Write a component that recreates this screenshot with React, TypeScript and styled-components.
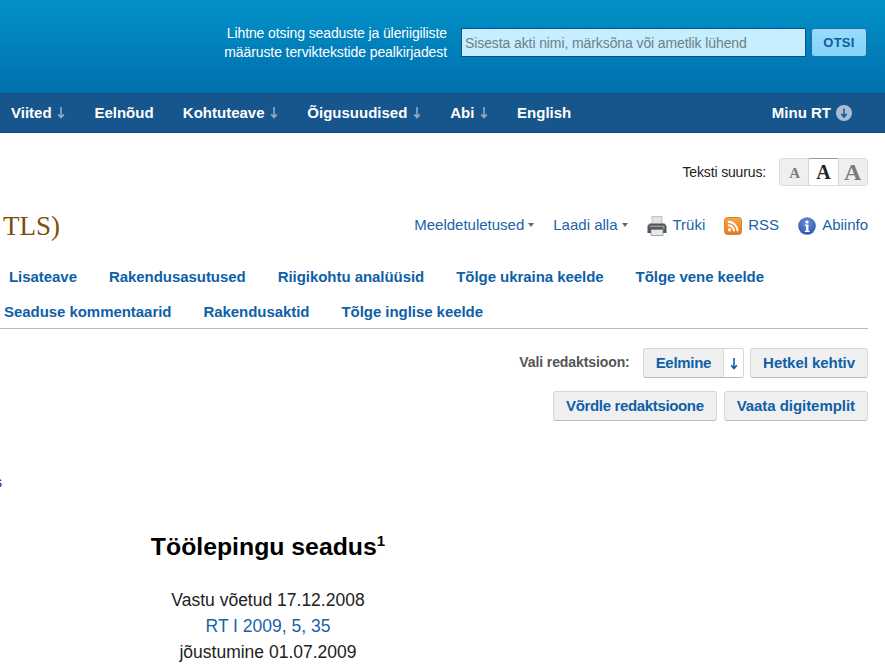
import { FC } from 'react';
import styled, { createGlobalStyle } from 'styled-components';

const GlobalStyle = createGlobalStyle`
  html, body {
    margin: 0;
    padding: 0;
    background: #fff;
    overflow: hidden;
  }
  body {
    font-family: "Liberation Sans", Arial, sans-serif;
    color: #222;
  }
`;

const Page = styled.div`
  width: 885px;
  height: 670px;
  overflow: hidden;
`;

const Header = styled.header`
  height: 93px;
  box-sizing: border-box;
  padding: 1px 18px 9px 0;
  display: flex;
  align-items: center;
  justify-content: flex-end;
  background-color: #0076b2;
  background-image:
    radial-gradient(rgba(255, 255, 255, 0.04) 1px, transparent 1px),
    linear-gradient(#0091c8, #006fae);
  background-size: 3px 3px, 100% 100%;
`;

const SearchLabel = styled.div`
  color: #fff;
  font-size: 14px;
  line-height: 19px;
  letter-spacing: -0.1px;
  text-align: right;
  margin-right: 14px;
`;

const SearchInput = styled.input`
  width: 345px;
  height: 29px;
  box-sizing: border-box;
  padding: 0 3px;
  border: 1px solid #0a5486;
  background: #c6eeff;
  font: 14px "Liberation Sans", Arial, sans-serif;
  letter-spacing: -0.1px;
  &::placeholder {
    color: #6f7f88;
    opacity: 1;
  }
`;

const SearchButton = styled.button`
  width: 56px;
  height: 29px;
  margin-left: 5px;
  padding: 0;
  border: 1px solid #1c6ea6;
  border-radius: 3px;
  background: linear-gradient(#98dcfb, #84d3f9);
  color: #0d5c9d;
  font: bold 13px "Liberation Sans", Arial, sans-serif;
  letter-spacing: 0.3px;
`;

const Nav = styled.nav`
  height: 40px;
  box-sizing: border-box;
  padding: 0 33px 1px 11px;
  display: flex;
  align-items: center;
  gap: 29.3px;
  background: #16568c;
  box-shadow: inset 0 1px #124f80, inset 0 -1px #124f80;
`;

const NavItem = styled.a`
  display: flex;
  align-items: center;
  gap: 5.5px;
  color: #fff;
  font-size: 15px;
  font-weight: bold;
`;

const ArrowSvg = styled.svg<{ $tone: string }>`
  display: block;
  color: ${({ $tone }) => $tone};
`;

const NavRight = styled(NavItem)`
  margin-left: auto;
  gap: 5px;
`;

const Content = styled.main`
  padding-right: 17px;
`;

const SizeRow = styled.div`
  height: 28px;
  margin-top: 25px;
  display: flex;
  align-items: center;
  justify-content: flex-end;
  gap: 13px;
  font-size: 14px;
  letter-spacing: -0.15px;
`;

const SizeControl = styled.div`
  display: flex;
  height: 28px;
  box-sizing: border-box;
  border: 1px solid #dcdcdc;
  border-radius: 3px;
  background: #efefef;
`;

const SizeCell = styled.span<{ $size: number; $active?: boolean }>`
  width: 29px;
  display: flex;
  align-items: center;
  justify-content: center;
  padding-top: ${({ $size }) => (24 - $size) / 4}px;
  font-family: "Liberation Serif", serif;
  font-weight: bold;
  font-size: ${({ $size }) => $size}px;
  color: ${({ $active }) => ($active ? '#222' : '#7c7c7c')};
  background: ${({ $active }) => ($active ? '#fff' : 'transparent')};
  box-shadow: ${({ $active }) => ($active ? '0 -1px #999, 1px 0 #d4d4d4, -1px 0 #d4d4d4' : 'none')};
`;

const TitleRow = styled.div`
  height: 40px;
  margin-top: 19px;
  display: flex;
  align-items: center;
  justify-content: space-between;
`;

const ActTitle = styled.h1`
  margin: 0 0 0 3px;
  padding-top: 2px;
  font: normal 27px "Liberation Serif", serif;
  color: #7d4e0a;
`;

const Tools = styled.div`
  display: flex;
  align-items: center;
  gap: 19px;
  margin-bottom: 2px;
`;

const Tool = styled.a`
  display: flex;
  align-items: center;
  gap: 6px;
  color: #1b63a8;
  font-size: 15px;
  svg {
    margin-top: 3px;
  }
`;

const MenuTool = styled(Tool)`
  gap: 4px;
`;

const Caret = styled.span`
  width: 0;
  height: 0;
  margin-top: 2px;
  border: 3.5px solid transparent;
  border-top: 4px solid #666;
  border-bottom: 0;
`;

const Tabs = styled.div`
  margin-top: 14px;
  border-bottom: 1px solid #bbb;
`;

const TabRow = styled.div<{ $inset: number }>`
  height: 35px;
  box-sizing: border-box;
  padding: 9px 0 0 ${({ $inset }) => $inset}px;
  display: flex;
  align-items: flex-start;
  gap: 32px;
  &:last-child {
    height: 34px;
  }
`;

const Tab = styled.a`
  color: #0f5fa8;
  font-size: 15px;
  font-weight: bold;
  line-height: 17px;
  letter-spacing: -0.05px;
`;

const VersionRow = styled.div`
  margin-top: 19px;
  display: flex;
  align-items: center;
  justify-content: flex-end;
  gap: 6px;
`;

const CompareRow = styled(VersionRow)`
  margin-top: 13px;
  gap: 7px;
`;

const VersionLabel = styled.span`
  margin-right: 7px;
  padding-bottom: 2px;
  color: #555;
  font-size: 14px;
  font-weight: bold;
  letter-spacing: -0.1px;
`;

const Btn = styled.a`
  height: 30px;
  box-sizing: border-box;
  padding: 0 12px 2px;
  display: flex;
  align-items: center;
  border: 1px solid #d8d8d8;
  border-bottom-color: #bbb;
  border-radius: 3px;
  background: #f0f0f0;
  color: #0f5fa8;
  font-size: 15px;
  font-weight: bold;
  letter-spacing: -0.05px;
`;

const TightBtn = styled(Btn)`
  letter-spacing: -0.35px;
`;

const SplitBtn = styled(Btn)`
  padding: 0;
  overflow: hidden;
`;

const SplitMain = styled.span`
  padding: 0 12px 2px 12px;
  height: 100%;
  box-sizing: border-box;
  display: flex;
  align-items: center;
  letter-spacing: -0.3px;
`;

const SplitArrow = styled.span`
  width: 19px;
  height: 100%;
  display: flex;
  align-items: center;
  justify-content: center;
  background: #fff;
  border-left: 1px solid #d8d8d8;
`;

const CutOff = styled.div`
  height: 16px;
  margin: 53px 0 0 -5px;
  color: #222266;
  font-size: 14px;
  line-height: 16px;
`;

const Document = styled.article`
  width: 536px;
  margin-top: 40px;
  text-align: center;
  font-size: 17.5px;
`;

const DocTitle = styled.h2`
  margin: 0 0 23px;
  font-size: 24.8px;
  line-height: 34px;
  color: #000;
`;

const Sup = styled.sup`
  font-size: 15px;
  line-height: 0;
`;

const DocLine = styled.div`
  line-height: 26px;
`;

const DocLink = styled.a`
  color: #1b63a8;
`;

const Arrow: FC<{ tone: string }> = ({ tone }) => (
  <ArrowSvg $tone={tone} width="8" height="13" viewBox="0 0 8 13">
    <path d="M4 1v10M1.2 8.4 4 11.6l2.8-3.2" fill="none" stroke="currentColor" strokeWidth="1.6" />
  </ArrowSvg>
);

const Printer: FC = () => (
  <svg width="20" height="20" viewBox="0 0 20 20">
    <rect x="5" y="0.5" width="10" height="8" fill="#dfe4e9" stroke="#a9b0b8" strokeWidth="0.7" />
    <path d="M2.5 7.5h15l2 2.5v7H.5v-7z" fill="#50555a" />
    <rect x="2.5" y="9.5" width="15" height="1.6" fill="#92989e" />
    <rect x="4" y="13.5" width="12" height="6" fill="#e6e9ec" stroke="#7f858b" strokeWidth="0.7" />
    <circle cx="16.8" cy="12" r="0.9" fill="#78cf63" />
  </svg>
);

const RssIcon: FC = () => (
  <svg width="18" height="18" viewBox="0 0 18 18">
    <defs>
      <linearGradient id="rss" x1="0" y1="0" x2="0" y2="1">
        <stop offset="0" stopColor="#f7a54a" />
        <stop offset="1" stopColor="#e9781e" />
      </linearGradient>
    </defs>
    <rect x="0.5" y="0.5" width="17" height="17" rx="3" fill="url(#rss)" stroke="#d9812f" />
    <circle cx="5.5" cy="12.8" r="1.7" fill="#fff" />
    <path d="M4 8.2a6 6 0 0 1 6 6M4 4.7a9.6 9.6 0 0 1 9.6 9.6" fill="none" stroke="#fff" strokeWidth="2" />
  </svg>
);

const InfoIcon: FC = () => (
  <svg width="18" height="18" viewBox="0 0 18 18">
    <defs>
      <radialGradient id="info" cx="0.5" cy="0.3" r="0.75">
        <stop offset="0" stopColor="#6d92e0" />
        <stop offset="1" stopColor="#2a50ad" />
      </radialGradient>
    </defs>
    <circle cx="9" cy="9" r="8.8" fill="url(#info)" />
    <circle cx="9" cy="5" r="1.6" fill="#fff" />
    <path d="M6.8 7.6h3.6v6.2h1.2v1.2H6.8v-1.2H8V8.8H6.8z" fill="#fff" />
  </svg>
);

const MinuIcon: FC = () => (
  <svg width="16" height="16" viewBox="0 0 16 16">
    <circle cx="8" cy="8" r="8" fill="#a9bed4" />
    <path d="M8 3.5v8M5.3 8.8 8 12l2.7-3.2" fill="none" stroke="#16568c" strokeWidth="1.5" />
  </svg>
);

const App: FC = () => (
  <Page>
    <GlobalStyle />
    <Header>
      <SearchLabel>
        Lihtne otsing seaduste ja üleriigiliste
        <br />
        määruste terviktekstide pealkirjadest
      </SearchLabel>
      <SearchInput placeholder="Sisesta akti nimi, märksõna või ametlik lühend" />
      <SearchButton>OTSI</SearchButton>
    </Header>
    <Nav>
      <NavItem>Viited <Arrow tone="#8eadc8" /></NavItem>
      <NavItem>Eelnõud</NavItem>
      <NavItem>Kohtuteave <Arrow tone="#8eadc8" /></NavItem>
      <NavItem>Õigusuudised <Arrow tone="#8eadc8" /></NavItem>
      <NavItem>Abi <Arrow tone="#8eadc8" /></NavItem>
      <NavItem>English</NavItem>
      <NavRight>Minu RT <MinuIcon /></NavRight>
    </Nav>
    <Content>
      <SizeRow>
        Teksti suurus:
        <SizeControl>
          <SizeCell $size={15}>A</SizeCell>
          <SizeCell $size={20} $active>A</SizeCell>
          <SizeCell $size={24}>A</SizeCell>
        </SizeControl>
      </SizeRow>
      <TitleRow>
        <ActTitle>TLS)</ActTitle>
        <Tools>
          <MenuTool>Meeldetuletused <Caret /></MenuTool>
          <MenuTool>Laadi alla <Caret /></MenuTool>
          <Tool><Printer /> Trüki</Tool>
          <Tool><RssIcon /> RSS</Tool>
          <Tool><InfoIcon /> Abiinfo</Tool>
        </Tools>
      </TitleRow>
      <Tabs>
        <TabRow $inset={9}>
          <Tab>Lisateave</Tab>
          <Tab>Rakendusasutused</Tab>
          <Tab>Riigikohtu analüüsid</Tab>
          <Tab>Tõlge ukraina keelde</Tab>
          <Tab>Tõlge vene keelde</Tab>
        </TabRow>
        <TabRow $inset={4}>
          <Tab>Seaduse kommentaarid</Tab>
          <Tab>Rakendusaktid</Tab>
          <Tab>Tõlge inglise keelde</Tab>
        </TabRow>
      </Tabs>
      <VersionRow>
        <VersionLabel>Vali redaktsioon:</VersionLabel>
        <SplitBtn>
          <SplitMain>Eelmine</SplitMain>
          <SplitArrow><Arrow tone="#0f5fa8" /></SplitArrow>
        </SplitBtn>
        <Btn>Hetkel kehtiv</Btn>
      </VersionRow>
      <CompareRow>
        <TightBtn>Võrdle redaktsioone</TightBtn>
        <Btn>Vaata digitemplit</Btn>
      </CompareRow>
      <CutOff>s</CutOff>
      <Document>
        <DocTitle>Töölepingu seadus<Sup>1</Sup></DocTitle>
        <DocLine>Vastu võetud 17.12.2008</DocLine>
        <DocLine><DocLink>RT I 2009, 5, 35</DocLink></DocLine>
        <DocLine>jõustumine 01.07.2009</DocLine>
      </Document>
    </Content>
  </Page>
);

export default App;
